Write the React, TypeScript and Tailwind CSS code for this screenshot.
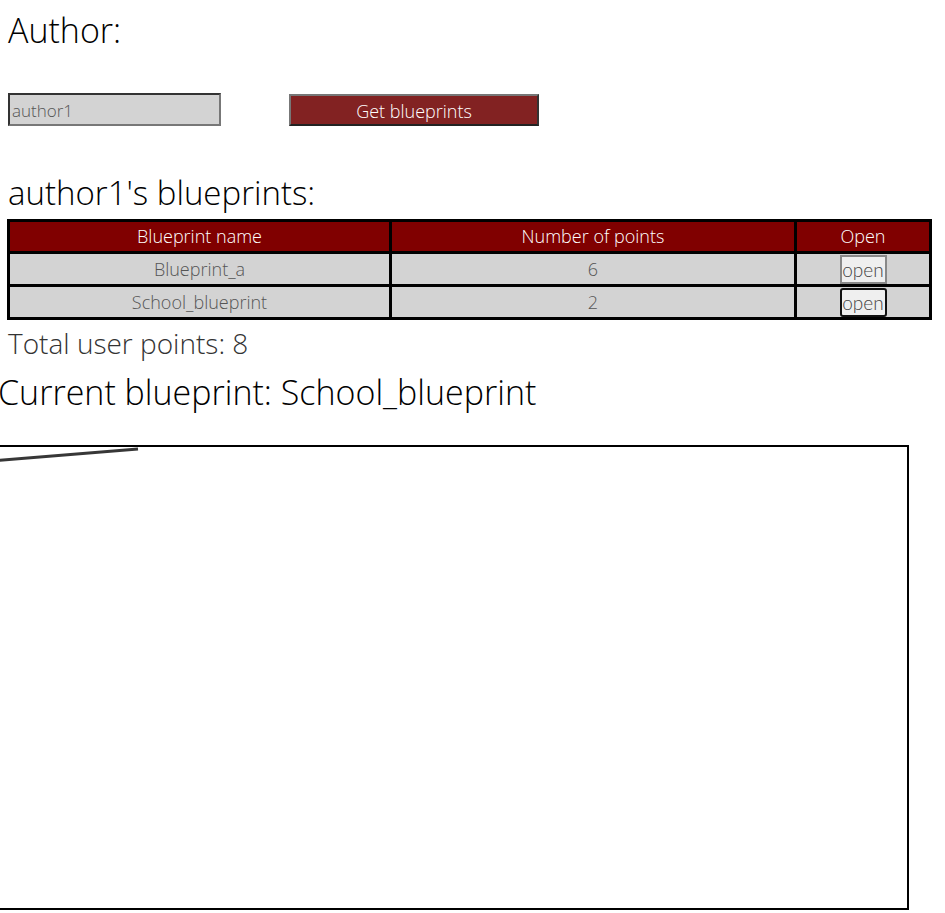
const rows = [
  { name: "Blueprint_a", points: 6, focused: false },
  { name: "School_blueprint", points: 2, focused: true },
];

export default function App() {
  return (
    <div className="min-h-[913px] overflow-hidden bg-white text-black font-['Open_Sans',sans-serif] font-light">
      <div className="px-2 pt-[6px]">
        <h1 className="text-[34px] leading-[48px]">Author:</h1>

        <div className="mt-[39px] flex items-center">
          <input
            defaultValue="author1"
            className="h-[33px] w-[213px] border-2 border-[#333] border-r-[#777] border-b-[#777] bg-[#d3d3d3] px-[2px] pt-[2px] text-[17px] font-light text-[#555] outline-none"
          />
          <button className="ml-[68px] h-[32px] w-[250px] border-2 border-[#777] border-r-[#333] border-b-[#222] bg-[#822222] pt-[2px] text-[18px] font-light text-white">
            Get blueprints
          </button>
        </div>

        <h2 className="mt-[45px] text-[33px] leading-[44px]">author1's blueprints:</h2>

        <table className="mt-[4px] w-[925px] -ml-[1px] border-collapse border-[3px] border-black text-[18px]">
          <thead>
            <tr className="bg-[#800000] text-white">
              <th className="w-[382px] border-[3px] border-black h-[32px] font-light">Blueprint name</th>
              <th className="w-[405px] border-[3px] border-black font-light">Number of points</th>
              <th className="border-[3px] border-black font-light">Open</th>
            </tr>
          </thead>
          <tbody>
            {rows.map((r) => (
              <tr key={r.name} className="bg-[#d3d3d3] text-[#555]">
                <td className="h-[33px] border-[3px] border-black text-center">{r.name}</td>
                <td className="border-[3px] border-black text-center">{r.points}</td>
                <td className="border-[3px] border-black text-center">
                  <button
                    className={
                      r.focused
                        ? "h-[29px] w-[47px] rounded-[3px] border-2 border-[#111] bg-[#efefef] p-0 text-[19px] leading-none text-[#444] font-['Lato',sans-serif]"
                        : "h-[29px] w-[47px] border-2 border-[#888] bg-[#efefef] p-0 text-[19px] leading-none text-[#444] font-['Lato',sans-serif]"
                    }
                  >
                    open
                  </button>
                </td>
              </tr>
            ))}
          </tbody>
        </table>

        <p className="mt-[5px] text-[28px] leading-[36px] text-[#333]">Total user points: 8</p>
      </div>

      <h2 className="-ml-[2px] mt-[8px] text-[34px] leading-[46px]">Current blueprint: School_blueprint</h2>

      <div className="-ml-[12px] mt-[30px] h-[465px] w-[921px] border-2 border-black">
        <svg width="917" height="461" viewBox="0 0 917 461" className="block">
          <line x1="0" y1="14" x2="148" y2="2" stroke="#222" strokeWidth="3" strokeLinecap="butt" opacity="0.9" />
        </svg>
      </div>
    </div>
  );
}
